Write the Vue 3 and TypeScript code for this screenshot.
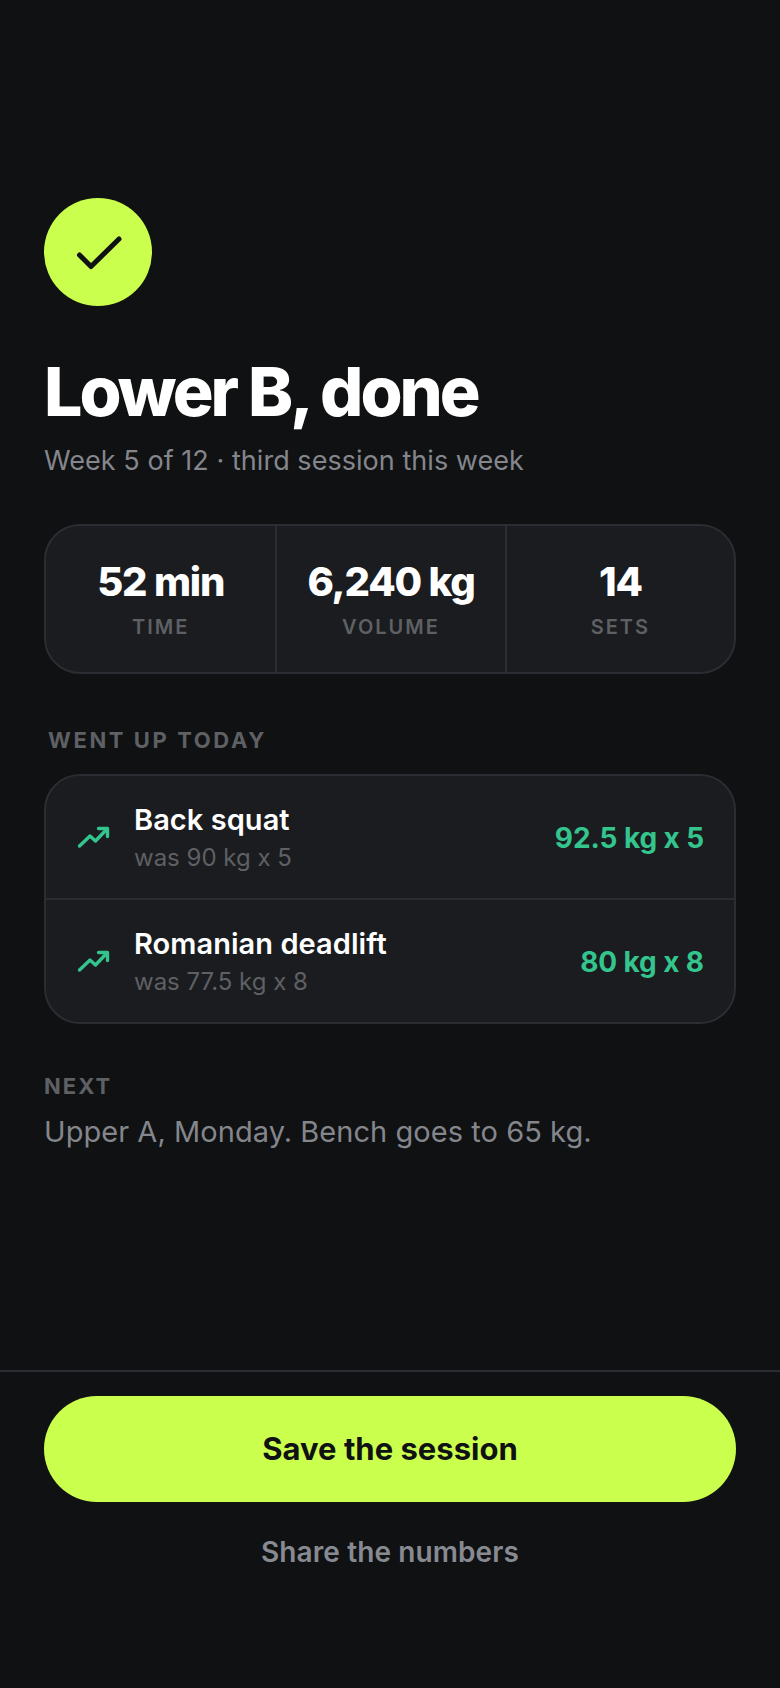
<script setup lang="ts">
interface Stat { value: string; label: string }
interface Lift { name: string; was: string; now: string }
const stats: Stat[] = [
  { value: '52 min', label: 'TIME' },
  { value: '6,240 kg', label: 'VOLUME' },
  { value: '14', label: 'SETS' },
]
const lifts: Lift[] = [
  { name: 'Back squat', was: 'was 90 kg x 5', now: '92.5 kg x 5' },
  { name: 'Romanian deadlift', was: 'was 77.5 kg x 8', now: '80 kg x 8' },
]
</script>

<template>
  <div class="screen">
    <main class="content">
      <div class="badge">
        <svg width="60" height="60" viewBox="0 0 60 60" fill="none" stroke="#0f1113" stroke-width="5" stroke-linecap="round" stroke-linejoin="round">
          <path d="M11.5 33 23 44.5 51 17" />
        </svg>
      </div>
      <h1 class="title">Lower B, done</h1>
      <p class="sub">Week 5 of 12 · third session this week</p>

      <section class="stats">
        <div v-for="s in stats" :key="s.label" class="stat">
          <div class="stat-value">{{ s.value }}</div>
          <div class="stat-label">{{ s.label }}</div>
        </div>
      </section>

      <h2 class="section-label">WENT UP TODAY</h2>
      <section class="lifts">
        <div v-for="l in lifts" :key="l.name" class="lift">
          <svg class="trend" width="36" height="36" viewBox="0 0 36 36" fill="none" stroke="#34c48d" stroke-width="3.4" stroke-linecap="round" stroke-linejoin="round">
            <path d="M3.5 26 14 16 19.5 21 31 9" />
            <path d="M22.5 8.5H31.5V16.5" />
          </svg>
          <div class="lift-text">
            <div class="lift-name">{{ l.name }}</div>
            <div class="lift-was">{{ l.was }}</div>
          </div>
          <div class="lift-now">{{ l.now }}</div>
        </div>
      </section>

      <div class="next">
        <div class="next-label">NEXT</div>
        <p class="next-text">Upper A, Monday. Bench goes to 65 kg.</p>
      </div>
    </main>

    <footer class="footer">
      <button class="primary" type="button">Save the session</button>
      <button class="secondary" type="button">Share the numbers</button>
    </footer>
  </div>
</template>

<style>
html, body { margin: 0; background: #0f1113; }
</style>

<style scoped>
.screen {
  width: 780px;
  height: 1688px;
  background: #0f1113;
  display: flex;
  flex-direction: column;
  font-family: Inter, "Liberation Sans", sans-serif;
  color: #fff;
  overflow: hidden;
}
.content {
  flex: 1;
  padding: 198px 44px 0;
  box-sizing: border-box;
}
.badge {
  width: 108px;
  height: 108px;
  border-radius: 50%;
  background: #cbff4d;
  display: flex;
  align-items: center;
  justify-content: center;
}
.title {
  margin: 49px 0 0;
  font-size: 68px;
  line-height: 72px;
  font-weight: 800;
  letter-spacing: -3px;
}
.sub {
  margin: 14px 0 0;
  font-size: 27px;
  line-height: 40px;
  letter-spacing: 0.04px;
  color: #84868c;
}
.stats {
  margin-top: 43px;
  display: grid;
  grid-template-columns: repeat(3, 1fr);
  background: #1a1c1f;
  border: 2px solid #2a2d31;
  border-radius: 36px;
  height: 150px;
  box-sizing: border-box;
}
.stat {
  display: flex;
  flex-direction: column;
  align-items: center;
  justify-content: center;
}
.stat + .stat { border-left: 2px solid #2a2d31; }
.stat-value {
  font-size: 40px;
  line-height: 48px;
  font-weight: 800;
  letter-spacing: -1.2px;
}
.stat-label {
  margin-top: 7px;
  font-size: 20px;
  line-height: 28px;
  font-weight: 600;
  letter-spacing: 2px;
  color: #5e6064;
}
.section-label {
  margin: 52px 0 0;
  padding-left: 4px;
  font-size: 22px;
  line-height: 28px;
  font-weight: 700;
  letter-spacing: 2.6px;
  color: #5e6064;
}
.lifts {
  margin-top: 20px;
  background: #1a1c1f;
  border: 2px solid #2a2d31;
  border-radius: 36px;
  box-sizing: border-box;
}
.lift {
  display: flex;
  align-items: center;
  padding: 2px 30px 0;
  height: 122px;
  box-sizing: border-box;
}
.lift + .lift { border-top: 2px solid #2a2d31; height: 124px; }
.trend { flex: none; }
.lift-text { flex: 1; margin-left: 22px; }
.lift-name {
  font-size: 29px;
  line-height: 36px;
  font-weight: 600;
  letter-spacing: 0.05px;
}
.lift-was {
  margin-top: 4px;
  font-size: 24px;
  line-height: 32px;
  color: #5e6064;
}
.lift-now {
  font-size: 28px;
  font-weight: 700;
  letter-spacing: -0.1px;
  color: #34c48d;
}
.next { margin-top: 48px; }
.next-label {
  font-size: 22px;
  line-height: 28px;
  font-weight: 700;
  letter-spacing: 2px;
  color: #5e6064;
}
.next-text {
  margin: 12px 0 0;
  font-size: 29px;
  line-height: 40px;
  letter-spacing: 0.05px;
  color: #84868c;
}
.footer {
  border-top: 2px solid #2a2d31;
  padding: 24px 44px 0;
  height: 318px;
  box-sizing: border-box;
  display: flex;
  flex-direction: column;
  align-items: stretch;
}
.primary {
  height: 106px;
  border: 0;
  border-radius: 53px;
  background: #cbff4d;
  color: #0f1113;
  font: 700 31px Inter, "Liberation Sans", sans-serif;
  padding: 0 0 2px;
}
.secondary {
  margin-top: 16px;
  height: 68px;
  border: 0;
  background: transparent;
  color: #888a91;
  font: 600 28px Inter, "Liberation Sans", sans-serif;
  letter-spacing: 0.1px;
}
</style>
